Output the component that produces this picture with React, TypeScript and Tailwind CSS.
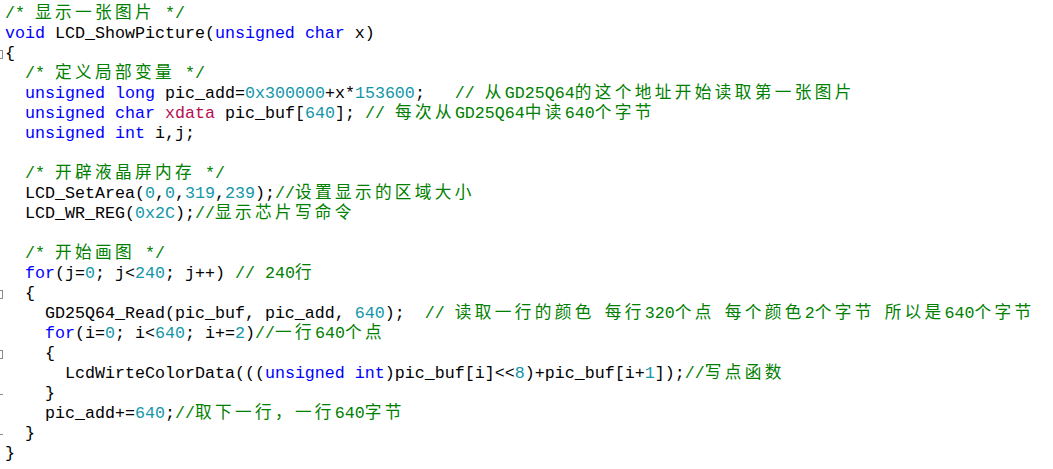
import React from "react";

type Kind = "p" | "k" | "n" | "c" | "x";
type Seg = [Kind, string];
type Mark = "open" | "close" | null;

const COLOR: Record<Kind, string> = {
  p: "text-black",
  k: "text-[#0000ff]",
  n: "text-[#1296a8]",
  c: "text-[#008000]",
  x: "text-[#b5104f]",
};

const LINES: { segs: Seg[]; mark?: Mark }[] = [
  { segs: [["c", "/* 显示一张图片 */"]] },
  { segs: [["k", "void"], ["p", " LCD_ShowPicture("], ["k", "unsigned"], ["p", " "], ["k", "char"], ["p", " x)"]] },
  { segs: [["p", "{"]], mark: "open" },
  { segs: [["p", "  "], ["c", "/* 定义局部变量 */"]] },
  {
    segs: [
      ["p", "  "], ["k", "unsigned"], ["p", " "], ["k", "long"], ["p", " pic_add="], ["n", "0x300000"],
      ["p", "+x*"], ["n", "153600"], ["p", ";   "], ["c", "// 从GD25Q64的这个地址开始读取第一张图片"],
    ],
  },
  {
    segs: [
      ["p", "  "], ["k", "unsigned"], ["p", " "], ["k", "char"], ["p", " "], ["x", "xdata"], ["p", " pic_buf["],
      ["n", "640"], ["p", "]; "], ["c", "// 每次从GD25Q64中读640个字节"],
    ],
  },
  { segs: [["p", "  "], ["k", "unsigned"], ["p", " "], ["k", "int"], ["p", " i,j;"]] },
  { segs: [] },
  { segs: [["p", "  "], ["c", "/* 开辟液晶屏内存 */"]] },
  {
    segs: [
      ["p", "  LCD_SetArea("], ["n", "0"], ["p", ","], ["n", "0"], ["p", ","], ["n", "319"], ["p", ","],
      ["n", "239"], ["p", ");"], ["c", "//设置显示的区域大小"],
    ],
  },
  { segs: [["p", "  LCD_WR_REG("], ["n", "0x2C"], ["p", ");"], ["c", "//显示芯片写命令"]] },
  { segs: [] },
  { segs: [["p", "  "], ["c", "/* 开始画图 */"]] },
  {
    segs: [
      ["p", "  "], ["k", "for"], ["p", "(j="], ["n", "0"], ["p", "; j<"], ["n", "240"], ["p", "; j++) "],
      ["c", "// 240行"],
    ],
  },
  { segs: [["p", "  {"]], mark: "open" },
  {
    segs: [
      ["p", "    GD25Q64_Read(pic_buf, pic_add, "], ["n", "640"], ["p", ");  "],
      ["c", "// 读取一行的颜色 每行320个点 每个颜色2个字节 所以是640个字节"],
    ],
  },
  {
    segs: [
      ["p", "    "], ["k", "for"], ["p", "(i="], ["n", "0"], ["p", "; i<"], ["n", "640"], ["p", "; i+="], ["n", "2"],
      ["p", ")"], ["c", "//一行640个点"],
    ],
  },
  { segs: [["p", "    {"]], mark: "open" },
  {
    segs: [
      ["p", "      LcdWirteColorData((("], ["k", "unsigned int"], ["p", ")pic_buf[i]<<"], ["n", "8"],
      ["p", ")+pic_buf[i+"], ["n", "1"], ["p", "]);"], ["c", "//写点函数"],
    ],
  },
  { segs: [["p", "    }"]], mark: "close" },
  { segs: [["p", "    pic_add+="], ["n", "640"], ["p", ";"], ["c", "//取下一行，一行640字节"]] },
  { segs: [["p", "  }"]], mark: "close" },
  { segs: [["p", "}"]] },
];

// CJK glyphs take two monospace cells (20px) in the editor
const CJK = /([\u3000-\u303f\u4e00-\u9fff\uff00-\uffef]+)/;

function Text({ text }: { text: string }) {
  return (
    <>
      {text.split(CJK).map((part, i) =>
        CJK.test(part) ? (
          <span key={i} className="tracking-[3.33px]">
            {part}
          </span>
        ) : (
          <span key={i}>{part}</span>
        )
      )}
    </>
  );
}

function Gutter({ mark }: { mark?: Mark }) {
  return (
    <div className="w-[5px] h-[20px] flex items-center">
      {mark === "open" && <div className="w-[3px] h-[9px] border border-l-0 border-[#8a8a8a]" />}
      {mark === "close" && <div className="w-[3px] h-px bg-[#8a8a8a]" />}
    </div>
  );
}

export default function App() {
  return (
    <div className="w-[1053px] h-[469px] bg-white overflow-hidden pt-[4px]">
      <div
        className="flex flex-col text-[16.67px] leading-[20px] whitespace-pre"
        style={{ fontFamily: '"Liberation Mono", "Noto Sans CJK SC", monospace' }}
      >
        {LINES.map((line, i) => (
          <div key={i} className="flex h-[20px]">
            <Gutter mark={line.mark} />
            <div>
              {line.segs.map(([kind, text], j) => (
                <span key={j} className={COLOR[kind]}>
                  <Text text={text} />
                </span>
              ))}
            </div>
          </div>
        ))}
      </div>
    </div>
  );
}
